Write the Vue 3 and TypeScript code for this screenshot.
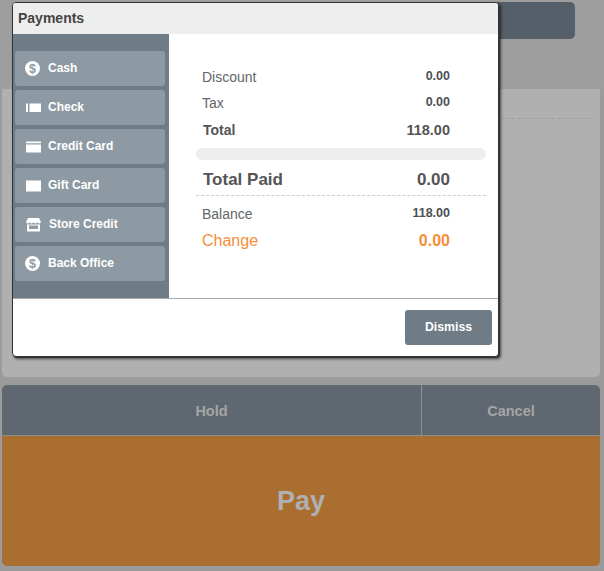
<script setup lang="ts">
type Icon = 'coin' | 'check' | 'credit' | 'gift' | 'store'
interface Method { label: string; icon: Icon }
const methods: Method[] = [
  { label: 'Cash', icon: 'coin' },
  { label: 'Check', icon: 'check' },
  { label: 'Credit Card', icon: 'credit' },
  { label: 'Gift Card', icon: 'gift' },
  { label: 'Store Credit', icon: 'store' },
  { label: 'Back Office', icon: 'coin' },
]
</script>

<template>
  <div class="page">
    <div class="topbar"><div class="topbtn"></div></div>
    <div class="panel"><div class="dash"></div></div>
    <div class="actions">
      <div class="row">
        <div class="hold">Hold</div>
        <div class="cancel">Cancel</div>
      </div>
      <div class="pay">Pay</div>
    </div>

    <div class="modal">
      <div class="head">Payments</div>
      <div class="body">
        <div class="side">
          <div v-for="m in methods" :key="m.label" class="method" :class="m.icon">
            <svg v-if="m.icon === 'coin'" class="ic" width="15" height="15" viewBox="0 0 15 15">
              <circle cx="7.5" cy="7.5" r="7.5" fill="#fff" />
              <text x="7.5" y="12" text-anchor="middle" class="dollar">$</text>
            </svg>
            <svg v-else-if="m.icon === 'check'" class="ic shift" width="15" height="15" viewBox="0 0 15 15">
              <path d="M0 3.500h2v8.500H0zM3.500 3.500H15v8.500H3.500z" fill="#fff" />
            </svg>
            <svg v-else-if="m.icon === 'credit'" class="ic shift" width="15" height="15" viewBox="0 0 15 15">
              <path d="M0 2.500h15v1.700H0zM0 5.500h15v8H0z" fill="#fff" />
            </svg>
            <svg v-else-if="m.icon === 'gift'" class="ic shift" width="15" height="15" viewBox="0 0 15 15">
              <path d="M0 2.500h15v11H0z" fill="#fff" />
            </svg>
            <svg v-else class="ic shift" width="15" height="15" viewBox="0 0 15 15">
              <path d="M2 1h11l2 4q-.9 1.500-1.900 1.500t-1.800-1.200q-.8 1.200-1.900 1.200T7.500 5.300Q6.700 6.500 5.600 6.500T3.700 5.300Q2.900 6.500 1.900 6.500T0 5z" fill="#fff" />
              <path d="M1 7.500h13v7H1zM3 8.500v3.500h9V8.500z" fill="#fff" fill-rule="evenodd" />
            </svg>
            <span>{{ m.label }}</span>
          </div>
        </div>
        <div class="main">
          <div class="line l-reg"><span>Discount</span><b>0.00</b></div>
          <div class="line l-reg"><span>Tax</span><b>0.00</b></div>
          <div class="line l-total"><span>Total</span><b>118.00</b></div>
          <div class="pill"></div>
          <div class="line l-paid"><span>Total Paid</span><b>0.00</b></div>
          <div class="sep"></div>
          <div class="line l-reg l-bal"><span>Balance</span><b>118.00</b></div>
          <div class="line l-change"><span>Change</span><b>0.00</b></div>
        </div>
      </div>
      <div class="foot"><div class="dismiss">Dismiss</div></div>
    </div>
  </div>
</template>

<style>
html, body { margin: 0; background: #9b9b9b; }
</style>

<style scoped>
.page {
  position: relative;
  width: 604px;
  height: 571px;
  overflow: hidden;
  background: #9b9b9b;
  font-family: "Liberation Sans", Arial, sans-serif;
  box-sizing: border-box;
}
.topbar { height: 89px; box-sizing: border-box; padding: 2px 29px 0 0; display: flex; justify-content: flex-end; background: #9e9e9e; }
.topbtn { width: 300px; height: 37px; background: #555f69; border-radius: 5px; }
.panel {
  margin: 0 4px 0 2px;
  height: 288px;
  background: #b0b0b0;
  border-radius: 0 0 5px 5px;
  position: relative;
  box-sizing: border-box;
  padding: 29px 10px 0 490px;
}
.dash { border-top: 1px dashed #a0a0a0; }
.actions { margin: 8px 4px 0 2px; border-radius: 5px; overflow: hidden; }
.row { display: flex; height: 50px; background: #5f6870; border-bottom: 1px solid #8e8e8e; }
.hold, .cancel {
  display: flex; align-items: center; justify-content: center;
  color: #a5a5a5; font-weight: 700; font-size: 14.5px; padding-top: 1px;
}
.hold { width: 419px; border-right: 1px solid #8e9296; }
.cancel { flex: 1; }
.pay {
  height: 130px;
  background: #a96e30;
  color: #b0b0b0;
  font-size: 27px;
  font-weight: 700;
  display: flex; align-items: center; justify-content: center;
}
.modal {
  position: absolute;
  left: 12px; top: 2px;
  width: 487px; height: 355px;
  box-sizing: border-box;
  background: #fff;
  border: 1px solid #333;
  border-radius: 4px;
  box-shadow: 1px 1px 0 #333, 2px 2px 3px rgba(0,0,0,.6);
  overflow: hidden;
  display: flex; flex-direction: column;
}
.head {
  height: 31px;
  flex: none;
  background: #eee;
  color: #444;
  font-size: 14px;
  font-weight: 700;
  line-height: 31px;
  padding-left: 5px;
}
.body { display: flex; height: 264px; flex: none; border-bottom: 1px solid #aaa; }
.side {
  width: 156px; flex: none;
  background: #6f7b85;
  box-sizing: border-box;
  padding: 17px 4px 0 2px;
  display: flex; flex-direction: column; gap: 4px;
}
.method {
  height: 35px;
  flex: none;
  background: #8d9aa3;
  border-radius: 3px;
  display: flex; align-items: center;
  padding-left: 10px;
  color: #fff;
  font-size: 12px;
  font-weight: 700;
}
.method span { margin-left: 8px; margin-top: -2px; }
.method .shift + span { margin-left: 7px; }
.method.store span { margin-left: 8px; }
.ic { flex: none; margin-top: -1px; }
.ic.shift { margin-left: 1px; }
.dollar { font-size: 12.5px; font-weight: 700; fill: #8d9aa3; font-family: "Liberation Sans", sans-serif; }
.main {
  flex: 1;
  box-sizing: border-box;
  padding: 30px 12px 0 27px;
  position: relative;
}
.line { display: flex; justify-content: space-between; align-items: baseline; padding: 0 36px 0 6px; color: #555; }
.l-reg { height: 26px; font-size: 14px; line-height: 26px; color: #62666a; }
.l-reg b { font-size: 12.5px; color: #4a4f55; position: relative; top: -2px; }
.l-total { height: 27px; line-height: 29px; font-size: 14px; font-weight: 700; }
.l-total b { font-size: 14.5px; }
.l-total span { padding-left: 1px; }
.pill { height: 12px; background: #eee; border-radius: 6px; margin-top: 5px; }
.l-paid { height: 33px; line-height: 35px; font-size: 17px; font-weight: 700; margin-top: 2px; }
.l-paid b { font-size: 17px; }
.l-paid span { padding-left: 1px; }
.sep { border-top: 1px dashed #ccc; margin-bottom: 5px; }
.l-bal { height: 27px; line-height: 27px; }
.l-change { height: 26px; line-height: 25px; font-size: 16px; font-weight: 400; color: #f58d3a; }
.l-change b { font-size: 16px; font-weight: 700; }
.foot { flex: 1; display: flex; justify-content: flex-end; align-items: flex-start; padding: 11px 6px 0 0; }
.dismiss {
  width: 87px; height: 35px;
  background: #6f7b85;
  border-radius: 3px;
  color: #fff;
  font-size: 12.3px;
  font-weight: 700;
  display: flex; align-items: center; justify-content: center;
  padding-bottom: 1px;
  box-sizing: border-box;
}
</style>
